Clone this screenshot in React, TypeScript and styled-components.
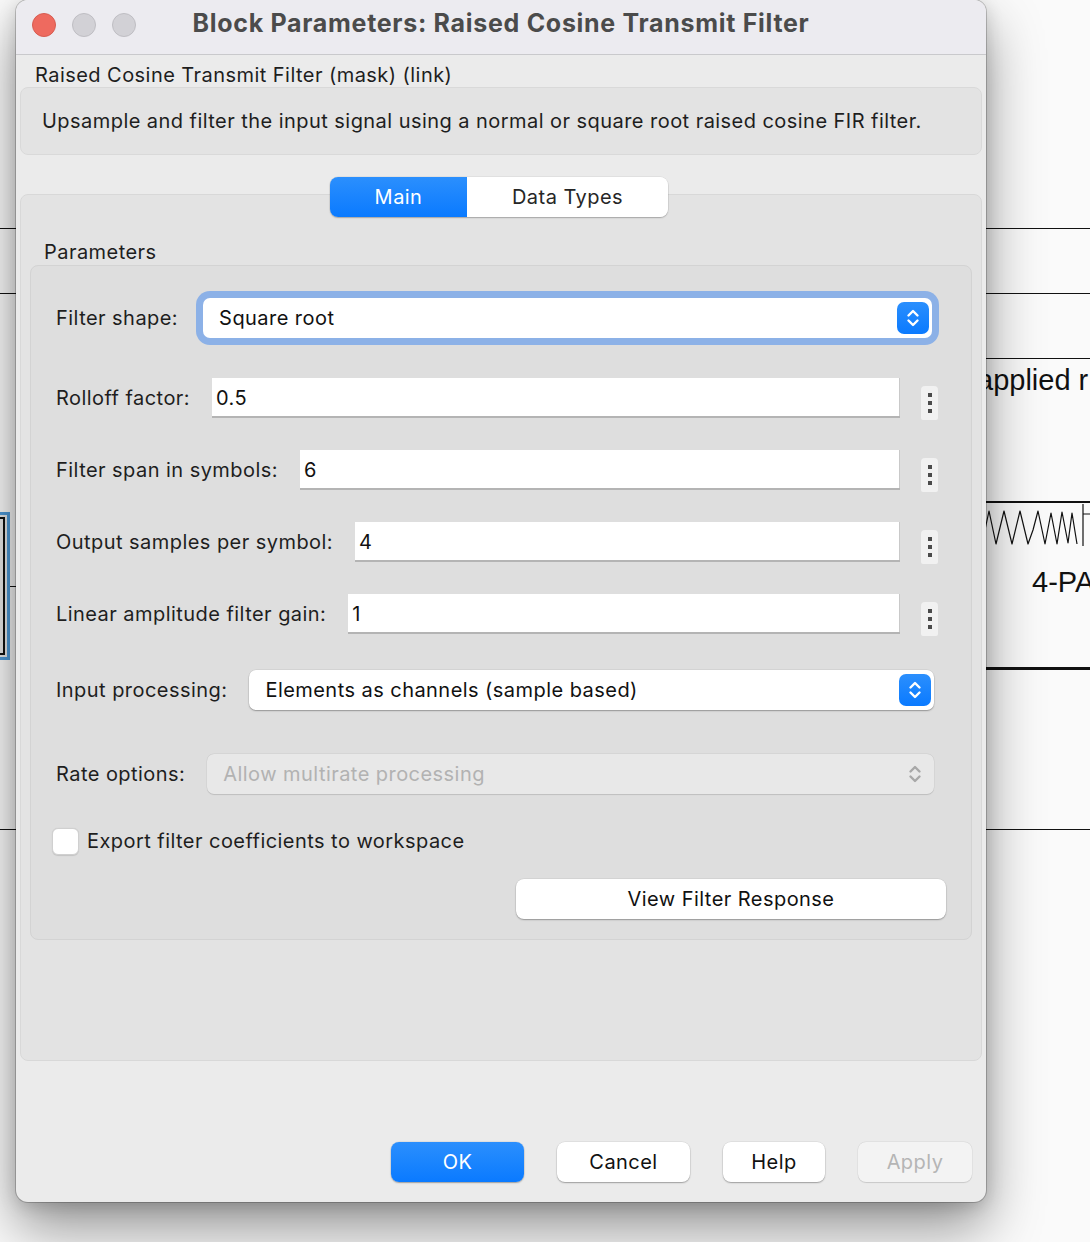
import styled, { createGlobalStyle } from "styled-components";

const GlobalStyle = createGlobalStyle`
  html, body {
    margin: 0;
    padding: 0;
  }
  body {
    font-family: Inter, "Noto Sans", sans-serif;
    letter-spacing: 0.45px;
    -webkit-font-smoothing: antialiased;
  }
`;

const Desktop = styled.div`
  position: relative;
  width: 1090px;
  height: 1242px;
  overflow: hidden;
  background: #fafafa;
`;

// simulink canvas behind the dialog
const WireLine = styled.div<{ $top: number; $left: number; $width: number; $thick?: number }>`
  position: absolute;
  top: ${(p) => p.$top}px;
  left: ${(p) => p.$left}px;
  width: ${(p) => p.$width}px;
  height: ${(p) => p.$thick ?? 1}px;
  background: #111;
`;

const CanvasText = styled.span<{ $top: number; $left: number }>`
  position: absolute;
  top: ${(p) => p.$top}px;
  left: ${(p) => p.$left}px;
  font-family: "Liberation Sans", Arial, sans-serif;
  font-size: 29px;
  line-height: 36px;
  letter-spacing: 0;
  color: #111;
  white-space: nowrap;
`;

const Wave = styled.svg`
  position: absolute;
  top: 500px;
  left: 980px;
`;

const SelectedBlock = styled.div`
  position: absolute;
  top: 512px;
  left: -30px;
  width: 40px;
  height: 148px;
  box-sizing: border-box;
  border: 3px solid #4f9ad8;
  background: #e8e8e8;
  &::after {
    content: "";
    position: absolute;
    inset: 2px;
    border: 2px solid #111;
  }
`;

const Window = styled.div`
  position: absolute;
  top: 0;
  left: 16px;
  width: 970px;
  height: 1202px;
  box-sizing: border-box;
  border-radius: 12px;
  overflow: hidden;
  background: #ebebeb;
  display: flex;
  flex-direction: column;
  box-shadow: 0 26px 56px rgba(0, 0, 0, 0.42), 0 4px 18px rgba(0, 0, 0, 0.16),
    0 0 0 1px rgba(0, 0, 0, 0.2);
`;

const TitleBar = styled.div`
  height: 55px;
  flex-shrink: 0;
  box-sizing: border-box;
  padding-bottom: 4px;
  display: grid;
  grid-template-columns: 1fr auto 1fr;
  align-items: center;
  background: #ecebf0;
  border-bottom: 1px solid #c9c9cc;
`;

const Lights = styled.div`
  display: flex;
  gap: 16px;
  padding-left: 16px;
`;

const Light = styled.span<{ $color: string; $edge: string }>`
  width: 24px;
  height: 24px;
  border-radius: 50%;
  box-sizing: border-box;
  background: ${(p) => p.$color};
  border: 1px solid ${(p) => p.$edge};
`;

const Title = styled.h1`
  margin: 0 0 4px 0;
  font-size: 25px;
  font-weight: 700;
  letter-spacing: 0.7px;
  color: #4b4b4b;
  white-space: nowrap;
`;

const Body = styled.div`
  flex: 1;
  display: flex;
  flex-direction: column;
  padding: 0 4px;
`;

const BlockName = styled.div`
  padding: 8px 0 0 15px;
  line-height: 24px;
  font-size: 20px;
  color: #1e1e1e;
`;

const DescBox = styled.div`
  height: 68px;
  box-sizing: border-box;
  display: flex;
  align-items: center;
  padding-left: 21px;
  background: #e3e3e3;
  border: 1px solid #d9d9d9;
  border-radius: 8px;
  font-size: 20px;
  color: #1e1e1e;
`;

const TabPanel = styled.div`
  margin-top: 39px;
  height: 867px;
  box-sizing: border-box;
  background: #e3e3e3;
  border: 1px solid #d8d8d8;
  border-radius: 8px;
  display: flex;
  flex-direction: column;
`;

const TabBar = styled.div`
  align-self: center;
  margin: -18px 4px 0 0;
  display: flex;
  height: 40px;
  border-radius: 8px;
  overflow: hidden;
  box-shadow: 0 1px 1.5px rgba(0, 0, 0, 0.25), 0 0 0 0.5px rgba(0, 0, 0, 0.08);
`;

const Tab = styled.div<{ $active?: boolean; $w: number }>`
  width: ${(p) => p.$w}px;
  display: flex;
  align-items: center;
  justify-content: center;
  font-size: 20px;
  color: ${(p) => (p.$active ? "#fff" : "#262626")};
  background: ${(p) =>
    p.$active ? "linear-gradient(#2b8ffd, #0a7aff)" : "#fff"};
`;

const GroupTitle = styled.div`
  margin: 23px 0 1px 23px;
  line-height: 24px;
  font-size: 20px;
  color: #1e1e1e;
`;

const Group = styled.div`
  margin: 0 9px;
  height: 675px;
  box-sizing: border-box;
  padding: 32px 25px 0 25px;
  background: #dedede;
  border: 1px solid #d3d3d3;
  border-radius: 8px;
  display: flex;
  flex-direction: column;
`;

const Row = styled.div<{ $mt: number }>`
  margin-top: ${(p) => p.$mt}px;
  height: 40px;
  display: flex;
  align-items: center;
`;

const Label = styled.span`
  font-size: 20px;
  color: #1e1e1e;
  white-space: nowrap;
  margin-right: 22px;
`;

const TextInput = styled.input`
  flex: 1;
  min-width: 0;
  height: 40px;
  box-sizing: border-box;
  border: none;
  outline: none;
  padding: 0 0 0 4px;
  font-family: inherit;
  font-size: 20px;
  letter-spacing: 0.45px;
  color: #111;
  background: #fff;
  box-shadow: inset 0 -2px 0 #b4b4b4, inset -1px 0 0 #c9c9c9;
`;

const DotsButton = styled.div`
  width: 17px;
  height: 34px;
  margin: 10px 8px 0 21px;
  box-sizing: border-box;
  border-radius: 4px 4px 2px 2px;
  background: #f1f1f1;
  display: flex;
  flex-direction: column;
  align-items: center;
  justify-content: center;
  gap: 4px;
  span {
    width: 4px;
    height: 4px;
    background: #4a4a4a;
  }
`;

const Select = styled.div<{ $focused?: boolean; $disabled?: boolean; $mr: number }>`
  flex: 1;
  height: 40px;
  margin-right: ${(p) => p.$mr}px;
  margin-left: ${(p) => (p.$focused ? 3 : 0)}px;
  box-sizing: border-box;
  display: flex;
  align-items: center;
  justify-content: space-between;
  padding: 0 3px 0 16px;
  border-radius: 7px;
  font-size: 20px;
  background: ${(p) => (p.$disabled ? "#e8e8e8" : "#fff")};
  color: ${(p) => (p.$disabled ? "#b2b2b2" : "#111")};
  box-shadow: ${(p) =>
    p.$focused
      ? "0 0 0 7px #8cb1e7"
      : p.$disabled
      ? "0 0.5px 1px rgba(0,0,0,0.12), 0 0 0 0.5px rgba(0,0,0,0.05)"
      : "0 1px 1.5px rgba(0,0,0,0.3), 0 0 0 0.5px rgba(0,0,0,0.08)"};
`;

const Stepper = styled.span<{ $disabled?: boolean }>`
  width: 32px;
  height: 32px;
  border-radius: 7px;
  display: flex;
  align-items: center;
  justify-content: center;
  background: ${(p) =>
    p.$disabled ? "transparent" : "linear-gradient(#2b8ffd, #0a7aff)"};
`;

const CheckRow = styled.label`
  margin-top: 27px;
  height: 40px;
  margin-left: -4px;
  display: flex;
  align-items: center;
  gap: 8px;
  font-size: 20px;
  color: #1e1e1e;
`;

const CheckBox = styled.span`
  width: 27px;
  height: 27px;
  box-sizing: border-box;
  border-radius: 6px;
  background: #fff;
  border: 1px solid #d0d0d0;
  box-shadow: 0 0.5px 1px rgba(0, 0, 0, 0.12);
`;

const ButtonRow = styled.div`
  margin-top: 18px;
  display: flex;
  justify-content: flex-end;
`;

const PushButton = styled.button<{ $w: number; $kind?: "primary" | "disabled" }>`
  width: ${(p) => p.$w}px;
  height: 40px;
  border: none;
  border-radius: 8px;
  font-family: inherit;
  font-size: 20px;
  letter-spacing: 0.45px;
  padding: 0;
  color: ${(p) =>
    p.$kind === "primary" ? "#fff" : p.$kind === "disabled" ? "#b5b5b5" : "#111"};
  background: ${(p) =>
    p.$kind === "primary"
      ? "linear-gradient(#2b8ffd, #0a7aff)"
      : p.$kind === "disabled"
      ? "#f3f3f3"
      : "#fff"};
  box-shadow: ${(p) =>
    p.$kind === "disabled"
      ? "0 0.5px 1px rgba(0,0,0,0.12), 0 0 0 0.5px rgba(0,0,0,0.06)"
      : "0 1px 1.5px rgba(0,0,0,0.3), 0 0 0 0.5px rgba(0,0,0,0.08)"};
`;

const Footer = styled.div`
  margin-top: auto;
  padding: 0 10px 20px 0;
  display: flex;
  justify-content: flex-end;
  gap: 33px;
`;

const Chevrons = ({ color }: { color: string }) => (
  <svg width="16" height="24" viewBox="0 0 16 24">
    <path
      d="M3.5 9.5 L8 5 L12.5 9.5 M3.5 14.5 L8 19 L12.5 14.5"
      fill="none"
      stroke={color}
      strokeWidth="2.4"
      strokeLinecap="round"
      strokeLinejoin="round"
    />
  </svg>
);

const Dots = () => (
  <DotsButton>
    <span />
    <span />
    <span />
  </DotsButton>
);

const inputs = [
  { label: "Rolloff factor:", value: "0.5", mt: 40 },
  { label: "Filter span in symbols:", value: "6", mt: 32 },
  { label: "Output samples per symbol:", value: "4", mt: 32 },
  { label: "Linear amplitude filter gain:", value: "1", mt: 32 },
];

const App = () => {
  return (
    <Desktop>
      <GlobalStyle />
      <WireLine $top={228} $left={0} $width={1090} />
      <WireLine $top={293} $left={0} $width={1090} />
      <WireLine $top={358} $left={600} $width={490} />
      <WireLine $top={501} $left={900} $width={190} $thick={2} />
      <WireLine $top={667} $left={900} $width={190} $thick={3} />
      <WireLine $top={829} $left={0} $width={1090} />
      <WireLine $top={586} $left={0} $width={20} />
      <CanvasText $top={362} $left={977}>applied r</CanvasText>
      <CanvasText $top={564} $left={1032}>4-PA</CanvasText>
      <Wave width="110" height="52" viewBox="0 0 110 52">
        <path
          d="M2 44 L9 11 L16 44 L24 11 L32 44 L40 11 L48 44 L53 30 L58 11 L65 44 L71 13 L77 44 L82 12 L88 43 L92 13 L97 44"
          fill="none"
          stroke="#111"
          strokeWidth="1.2"
          strokeLinejoin="round"
        />
        <path d="M103 4 L103 46 M103 14 L110 14" fill="none" stroke="#111" strokeWidth="1.2" />
      </Wave>
      <SelectedBlock />

      <Window>
        <TitleBar>
          <Lights>
            <Light $color="#ee6a5f" $edge="#d75c51" />
            <Light $color="#d2d1d6" $edge="#bfbec3" />
            <Light $color="#d2d1d6" $edge="#bfbec3" />
          </Lights>
          <Title>Block Parameters: Raised Cosine Transmit Filter</Title>
          <span />
        </TitleBar>
        <Body>
          <BlockName>Raised Cosine Transmit Filter (mask) (link)</BlockName>
          <DescBox>
            Upsample and filter the input signal using a normal or square root
            raised cosine FIR filter.
          </DescBox>
          <TabPanel>
            <TabBar>
              <Tab $active $w={137}>Main</Tab>
              <Tab $w={201}>Data Types</Tab>
            </TabBar>
            <GroupTitle>Parameters</GroupTitle>
            <Group>
              <Row $mt={0}>
                <Label>Filter shape:</Label>
                <Select $focused $mr={14}>
                  Square root
                  <Stepper>
                    <Chevrons color="#fff" />
                  </Stepper>
                </Select>
              </Row>
              {inputs.map((item) => (
                <Row key={item.label} $mt={item.mt}>
                  <Label>{item.label}</Label>
                  <TextInput defaultValue={item.value} />
                  <Dots />
                </Row>
              ))}
              <Row $mt={36}>
                <Label>Input processing:</Label>
                <Select $mr={12}>
                  Elements as channels (sample based)
                  <Stepper>
                    <Chevrons color="#fff" />
                  </Stepper>
                </Select>
              </Row>
              <Row $mt={44}>
                <Label>Rate options:</Label>
                <Select $disabled $mr={12}>
                  Allow multirate processing
                  <Stepper $disabled>
                    <Chevrons color="#a8a8a8" />
                  </Stepper>
                </Select>
              </Row>
              <CheckRow>
                <CheckBox />
                Export filter coefficients to workspace
              </CheckRow>
              <ButtonRow>
                <PushButton $w={430}>View Filter Response</PushButton>
              </ButtonRow>
            </Group>
          </TabPanel>
          <Footer>
            <PushButton $w={133} $kind="primary">OK</PushButton>
            <PushButton $w={133}>Cancel</PushButton>
            <PushButton $w={102}>Help</PushButton>
            <PushButton $w={114} $kind="disabled">Apply</PushButton>
          </Footer>
        </Body>
      </Window>
    </Desktop>
  );
};

export default App;
